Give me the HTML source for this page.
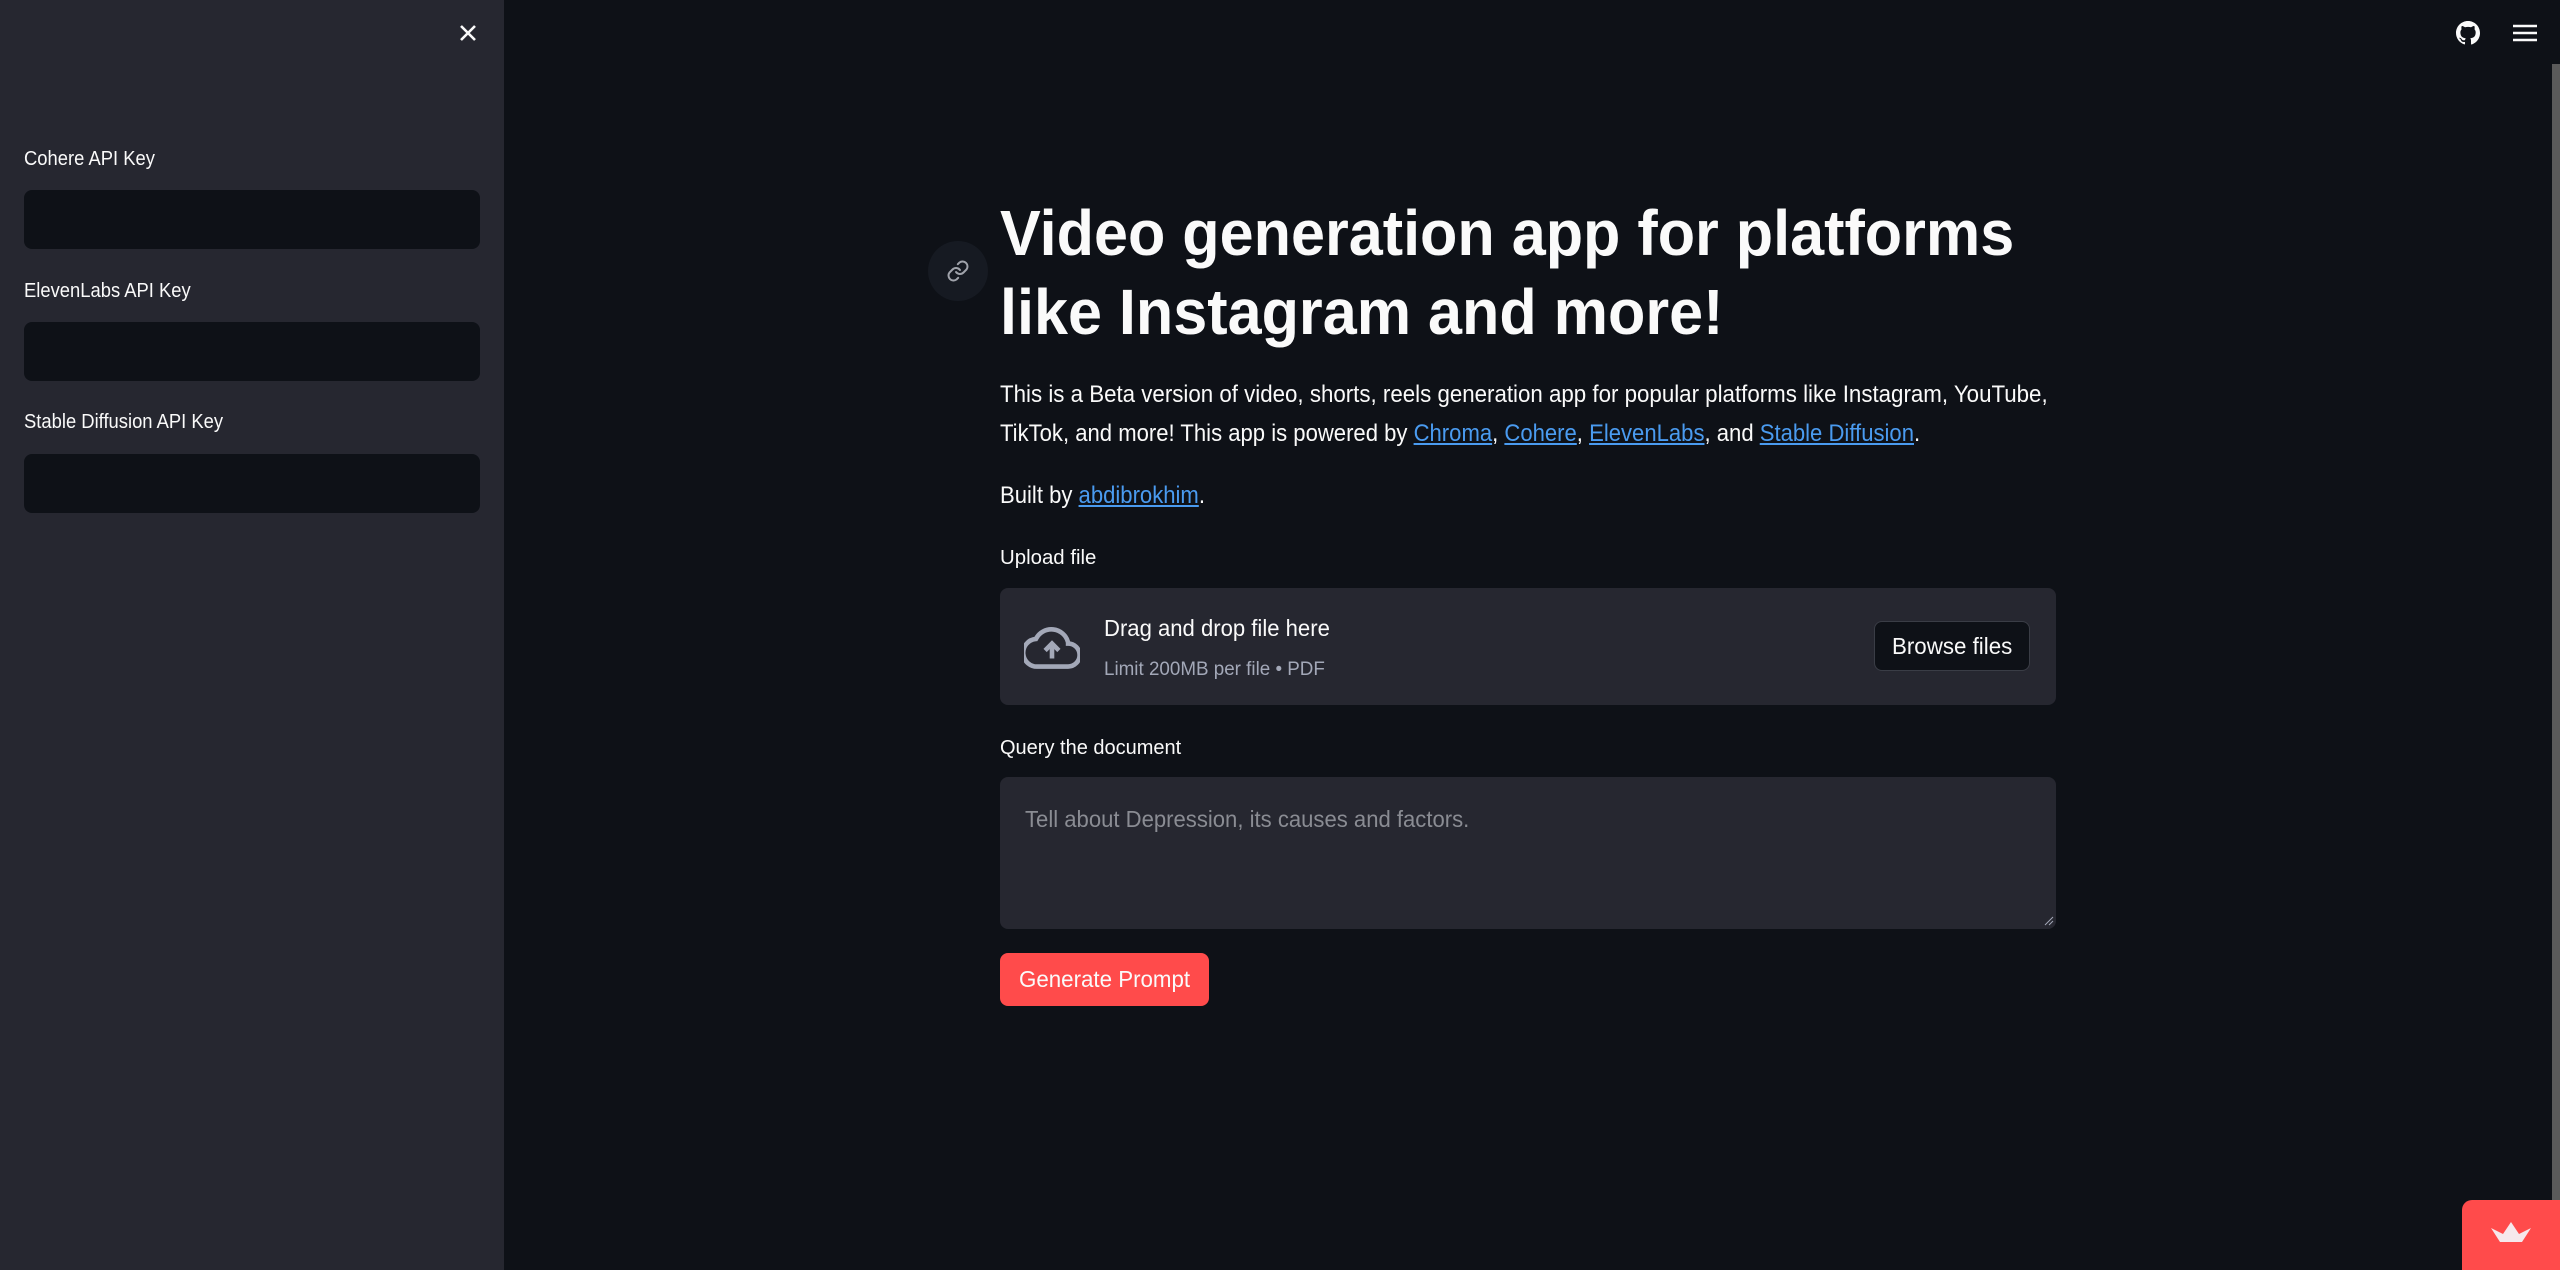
<!DOCTYPE html>
<html><head><meta charset="utf-8"><style>
*{box-sizing:border-box;margin:0;padding:0}
body{width:2560px;height:1270px;background:#0e1117;overflow:hidden;position:relative;font-family:"Liberation Sans",sans-serif;color:#fafafa}
.a{position:absolute;white-space:nowrap}
.side{position:absolute;left:0;top:0;width:504px;height:1270px;background:#262730}
.inp{position:absolute;left:24px;width:456px;height:59px;background:#0e1117;border-radius:8px}
.lbl{font-size:20px;color:#fafafa}
a{color:#4a9bf0;text-decoration:underline}
.sx{display:inline-block;transform-origin:0 50%}
</style></head><body>
<div class="side">
  <svg class="a" style="left:458px;top:23px" width="20" height="20" viewBox="0 0 20 20"><path d="M3 3L17 17M17 3L3 17" stroke="#fafafa" stroke-width="2.6"/></svg>
  <div class="a lbl" style="left:24px;top:148px"><span class="sx" style="transform:scaleX(0.92)">Cohere API Key</span></div>
  <div class="inp" style="top:190px"></div>
  <div class="a lbl" style="left:24px;top:280px"><span class="sx" style="transform:scaleX(0.92)">ElevenLabs API Key</span></div>
  <div class="inp" style="top:322px"></div>
  <div class="a lbl" style="left:24px;top:411px"><span class="sx" style="transform:scaleX(0.92)">Stable Diffusion API Key</span></div>
  <div class="inp" style="top:454px"></div>
</div>

<svg class="a" style="left:2456px;top:21px" width="24" height="24" viewBox="0 0 16 16"><path fill="#fafafa" d="M8 0C3.58 0 0 3.580 0 8c0 3.54 2.29 6.53 5.470 7.59.4.07.55-.17.55-.38v-1.33c-2.23.48-2.7-1.07-2.7-1.07-.36-.92-.89-1.170-.89-1.17-.73-.5.06-.49.06-.49.8.06 1.23.83 1.23.83.71 1.22 1.87.87 2.330.66.07-.52.28-.87.51-1.07-1.78-.2-3.64-.89-3.64-3.95 0-.87.31-1.59.82-2.15-.08-.2-.36-1.020.08-2.12 0 0 .67-.21 2.2.82.64-.18 1.32-.27 2-.27.68 0 1.36.09 2 .27 1.53-1.04 2.2-.82 2.2-.82.44 1.1.16 1.92.08 2.12.51.56.82 1.27.82 2.15 0 3.07-1.87 3.75-3.65 3.95.29.25.54.73.54 1.48v2.2c0 .21.15.46.55.38A8.01 8.01 0 0016 8c0-4.42-3.58-8-8-8z"/></svg>
<svg class="a" style="left:2513px;top:23px" width="24" height="20" viewBox="0 0 24 20"><path d="M0 3H24M0 10H24M0 17H24" stroke="#fafafa" stroke-width="2.6"/></svg>
<div class="a" style="left:2552px;top:64px;width:8px;height:1206px;background:#5a5a5a"></div>

<div class="a" style="left:928px;top:241px;width:60px;height:60px;border-radius:50%;background:#161a22"></div>
<svg class="a" style="left:946px;top:259px" width="24" height="24" viewBox="0 0 24 24" fill="none" stroke="#a0a3ab" stroke-width="2" stroke-linecap="round"><path d="M10 13a5 5 0 007.5.5l3-3a5 5 0 00-7-7l-1.7 1.7"/><path d="M14 11a5 5 0 00-7.5-.5l-3 3a5 5 0 007 7l1.7-1.7"/></svg>

<div class="a" style="left:1000px;top:194px;font-size:64px;font-weight:bold;line-height:79px"><span class="sx" style="transform:scaleX(0.955)">Video generation app for platforms</span><br><span class="sx" style="transform:scaleX(0.955)">like Instagram and more!</span></div>

<div class="a" style="left:1000px;top:375px;font-size:24px;line-height:39px"><span class="sx" style="transform:scaleX(0.929)">This is a Beta version of video, shorts, reels generation app for popular platforms like Instagram, YouTube,</span><br><span class="sx" style="transform:scaleX(0.92)">TikTok, and more! This app is powered by <a>Chroma</a>, <a>Cohere</a>, <a>ElevenLabs</a>, and <a>Stable Diffusion</a>.</span></div>
<div class="a" style="left:1000px;top:482px;font-size:24px"><span class="sx" style="transform:scaleX(0.92)">Built by <a>abdibrokhim</a>.</span></div>

<div class="a" style="left:1000px;top:547px;font-size:20px"><span class="sx" style="transform:scaleX(1.02)">Upload file</span></div>
<div class="a" style="left:1000px;top:588px;width:1056px;height:117px;background:#262730;border-radius:8px"></div>
<svg class="a" style="left:1024px;top:624px" width="56" height="46" viewBox="0 0 24 20"><path d="M19 8A7.5 7.5 0 005 6.5 6 6 0 006 18.5h13a5 5 0 000-10z" fill="none" stroke="#a3a8b8" stroke-width="2"/><path d="M12 15V9M9 11.5l3-3 3 3" stroke="#a3a8b8" stroke-width="2" fill="none"/></svg>
<div class="a" style="left:1104px;top:615px;font-size:23px"><span class="sx" style="transform:scaleX(0.96)">Drag and drop file here</span></div>
<div class="a" style="left:1104px;top:659px;font-size:19px;color:#a3a8b8"><span class="sx" style="transform:scaleX(0.99)">Limit 200MB per file • PDF</span></div>
<div class="a" style="left:1874px;top:621px;width:156px;height:50px;background:#0e1117;border:1px solid #3a3d46;border-radius:8px;font-size:23px;line-height:48px;padding-left:17px"><span class="sx" style="transform:scaleX(0.97)">Browse files</span></div>

<div class="a" style="left:1000px;top:737px;font-size:20px"><span class="sx" style="transform:scaleX(1.0)">Query the document</span></div>
<div class="a" style="left:1000px;top:777px;width:1056px;height:152px;background:#262730;border-radius:8px"></div>
<div class="a" style="left:1025px;top:806px;font-size:23px;color:#8a8c93"><span class="sx" style="transform:scaleX(0.96)">Tell about Depression, its causes and factors.</span></div>
<svg class="a" style="left:2044px;top:916px" width="10" height="10"><path d="M1 9L9 1M5 9L9 5" stroke="#a3a8b8" stroke-width="1"/></svg>

<div class="a" style="left:1000px;top:953px;width:209px;height:53px;background:#ff4b4b;border-radius:8px;font-size:23px;line-height:53px;padding-left:19px"><span class="sx" style="transform:scaleX(0.97)">Generate Prompt</span></div>

<div class="a" style="left:2462px;top:1200px;width:98px;height:70px;background:#ff4b4b;border-top-left-radius:10px"></div>
<svg class="a" style="left:2491px;top:1222px" width="40" height="24" viewBox="0 0 40 24"><path d="M0 6L9 20H31L40 6L28 12L20 0L12 12Z" fill="#f6e8ec"/></svg>
</body></html>
